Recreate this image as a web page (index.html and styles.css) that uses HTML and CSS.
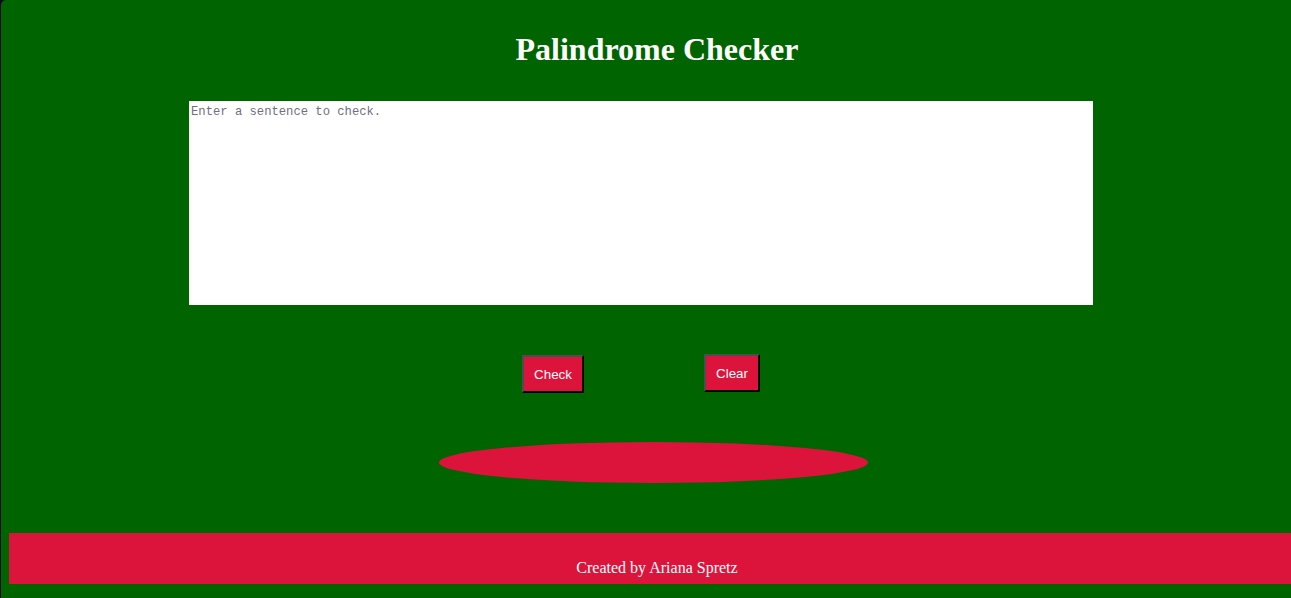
FILE: index.html
```html
<!DOCTYPE html>
<html lang="en">
<head>
<meta charset="utf-8">
<title>Palindrome Checker</title>
<link rel="stylesheet" href="styles.css">
</head>
<body>
  <main class="wrapper">
    <h1 class="title">Palindrome Checker</h1>
    <textarea class="text-input" placeholder="Enter a sentence to check."></textarea>
    <div class="button-row">
      <button class="btn btn-check" type="button">Check</button>
      <button class="btn btn-clear" type="button">Clear</button>
    </div>
    <div class="result"></div>
    <footer class="footer">Created by Ariana Spretz</footer>
  </main>
</body>
</html>
```

FILE: styles.css
```css
html {
  height: 100%;
  overflow: hidden;
  background: #0a0a23;
}

body {
  margin: 0 0 0 1px;
  min-height: 100%;
  background: #006400;
  border-top-left-radius: 5px;
  overflow: hidden;
  font-family: "Liberation Serif", "Times New Roman", serif;
}

.wrapper {
  margin-left: 8px;
  width: 1296px;
}

.title {
  margin: 31px 0 33px;
  font-size: 32px;
  line-height: 37px;
  font-weight: bold;
  text-align: center;
  color: #ffffff;
}

.text-input {
  display: block;
  margin: 0 0 0 180px;
  width: 904px;
  height: 204px;
  box-sizing: border-box;
  border: none;
  padding: 4px 2px 2px;
  background: #ffffff;
  font-family: "Liberation Mono", "Courier New", monospace;
  font-size: 12.2px;
  resize: none;
  outline: none;
}

.text-input::placeholder {
  color: #6f6f7f;
}

.button-row {
  display: flex;
  justify-content: flex-start;
  align-items: flex-start;
  gap: 120px;
  margin: 49px 0 0 180px;
  padding-left: 333px;
  width: 904px;
  box-sizing: border-box;
}

.btn {
  box-sizing: border-box;
  height: 38px;
  padding: 0 9px;
  background: #dc143c;
  color: #ffffff;
  font-family: "Liberation Sans", Arial, sans-serif;
  font-size: 13.333px;
  border-style: solid;
  border-width: 2px;
  border-color: #4d4d4d #000000 #000000 #4d4d4d;
  cursor: pointer;
}

.btn-check {
  width: 62px;
  margin-top: 1px;
}

.btn-clear {
  width: 56px;
}

.result {
  margin: 49px 0 0 430px;
  width: 429px;
  height: 41px;
  background: #dc143c;
  border-radius: 50%;
}

.footer {
  box-sizing: border-box;
  margin-top: 50px;
  height: 51px;
  padding-top: 26px;
  background: #dc143c;
  color: #ffffff;
  font-size: 16px;
  line-height: 18px;
  text-align: center;
}
```
